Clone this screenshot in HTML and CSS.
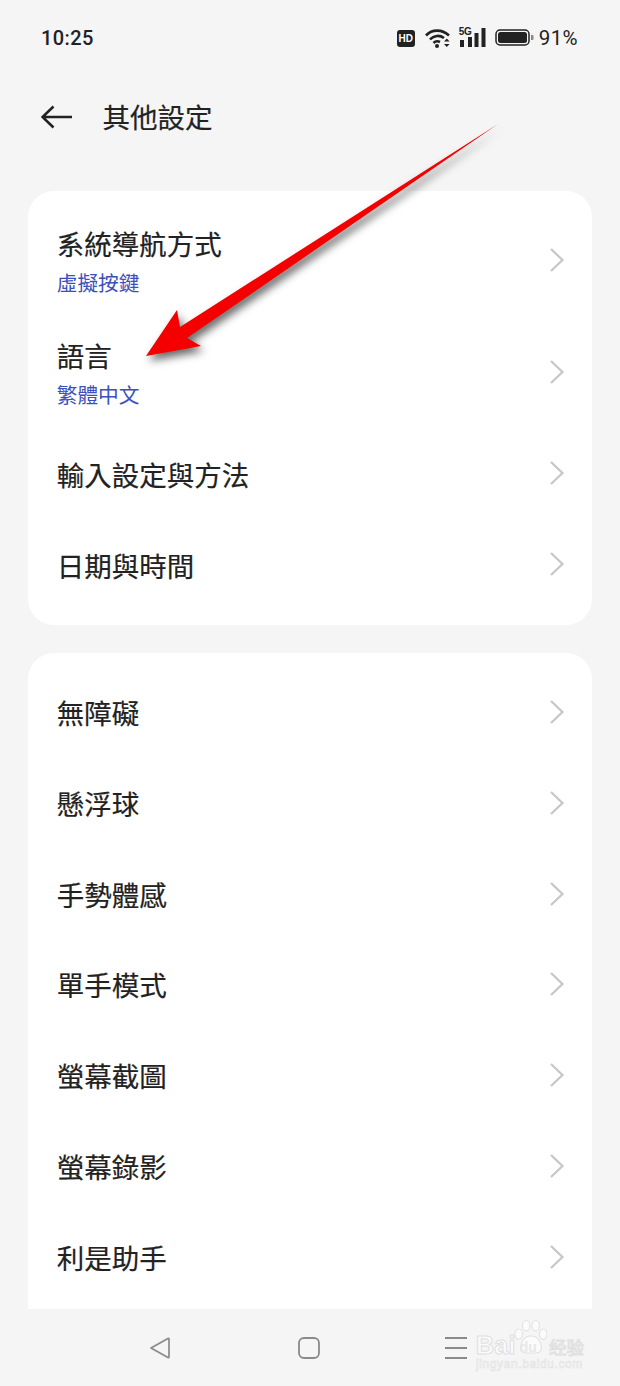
FILE: index.html
```html
<!DOCTYPE html>
<html lang="zh-Hant">
<head>
<meta charset="utf-8">
<title>其他設定</title>
<link rel="stylesheet" href="styles.css">
</head>
<body>
<div class="screen">
  <div class="status">
    <span class="time">10:25</span>
    <div class="status-right">
      <svg class="i-hd" viewBox="0 0 18 17"><rect width="18" height="17" rx="3" fill="#222"/></svg>
      <span class="hd-label">HD</span>
      <svg class="i-wifi" viewBox="0 0 26 20"><g fill="none" stroke="#222" stroke-width="2.6"><path d="M1 7.5C7 1 17 1 24 7.5"/><path d="M5 11.5C9 7 15 7 19 10"/><path d="M8.5 15C10.5 13 13 13 15 14"/></g><circle cx="12" cy="18" r="2" fill="#222"/><path d="M19 13.5l2.8-3 2.800 3zM19 16l2.800 3 2.800-3z" fill="#222"/></svg>
      <div class="signal">
        <span class="fiveg">5G</span>
        <svg class="i-bars" viewBox="0 0 28 19"><g fill="#222"><rect x="1" y="12" width="4" height="7"/><rect x="9" y="9" width="4" height="10"/><rect x="15.500" y="5" width="4" height="14"/><rect x="22.500" y="0" width="4" height="19"/></g></svg>
      </div>
      <svg class="i-batt" viewBox="0 0 39 17"><rect x="1" y="1" width="33" height="15" rx="4" fill="none" stroke="#222" stroke-width="1.500"/><rect x="3" y="3" width="29" height="11" rx="2.500" fill="#222"/><path d="M36 6h1.500a1 1 0 0 1 1 1v3a1 1 0 0 1-1 1H36z" fill="#888"/></svg>
      <span class="pct">91%</span>
    </div>
  </div>

  <header class="head">
    <svg class="i-back" viewBox="0 0 32 24"><path d="M31 12H2M12.500 1.500L1.500 12l11 10.500" fill="none" stroke="#222" stroke-width="2.600"/></svg>
    <h1 class="title">其他設定</h1>
  </header>

  <main class="list">
    <section class="card">
      <div class="row row-tall"><div class="copy"><div class="label">系統導航方式</div><div class="sub">虛擬按鍵</div></div><svg class="chev" viewBox="0 0 16 26"><path d="M2 2l11.500 11L2 24"/></svg></div>
      <div class="row row-tall"><div class="copy"><div class="label">語言</div><div class="sub">繁體中文</div></div><svg class="chev" viewBox="0 0 16 26"><path d="M2 2l11.500 11L2 24"/></svg></div>
      <div class="row"><div class="label label-low">輸入設定與方法</div><svg class="chev" viewBox="0 0 16 26"><path d="M2 2l11.500 11L2 24"/></svg></div>
      <div class="row"><div class="label label-low">日期與時間</div><svg class="chev" viewBox="0 0 16 26"><path d="M2 2l11.500 11L2 24"/></svg></div>
    </section>
    <section class="card card-open">
      <div class="row"><div class="label">無障礙</div><svg class="chev" viewBox="0 0 16 26"><path d="M2 2l11.500 11L2 24"/></svg></div>
      <div class="row"><div class="label">懸浮球</div><svg class="chev" viewBox="0 0 16 26"><path d="M2 2l11.500 11L2 24"/></svg></div>
      <div class="row"><div class="label">手勢體感</div><svg class="chev" viewBox="0 0 16 26"><path d="M2 2l11.500 11L2 24"/></svg></div>
      <div class="row"><div class="label">單手模式</div><svg class="chev" viewBox="0 0 16 26"><path d="M2 2l11.500 11L2 24"/></svg></div>
      <div class="row"><div class="label">螢幕截圖</div><svg class="chev" viewBox="0 0 16 26"><path d="M2 2l11.500 11L2 24"/></svg></div>
      <div class="row"><div class="label">螢幕錄影</div><svg class="chev" viewBox="0 0 16 26"><path d="M2 2l11.500 11L2 24"/></svg></div>
      <div class="row"><div class="label">利是助手</div><svg class="chev" viewBox="0 0 16 26"><path d="M2 2l11.500 11L2 24"/></svg></div>
    </section>
  </main>

  <nav class="nav">
    <svg class="nav-i" viewBox="0 0 22 22"><path d="M2 11L19 1.500q1-.4 1 .8v17.400q0 1.200-1 .8z" fill="none" stroke="#8a8a8a" stroke-width="1.700" stroke-linejoin="round"/></svg>
    <svg class="nav-i nav-home" viewBox="0 0 22 22"><rect x="1" y="1" width="20" height="20" rx="5" fill="none" stroke="#8a8a8a" stroke-width="1.800"/></svg>
    <svg class="nav-i" viewBox="0 0 22 22"><path d="M0 1h22M0 11h22M0 21h22" stroke="#8a8a8a" stroke-width="1.800"/></svg>
  </nav>

  <svg class="arrow" viewBox="0 0 620 400"><polygon points="498,124 187,338 201,346 146,356 177,310 180,327" fill="#f40000"/></svg>

  <div class="mark">
    <svg class="paw" viewBox="0 0 36 36"><g fill="#fbfbfb" stroke="#e2e2e2" stroke-width="1.200"><ellipse cx="6" cy="15" rx="4" ry="5.500"/><ellipse cx="14" cy="6" rx="4" ry="5.500"/><ellipse cx="24" cy="6" rx="4" ry="5.500"/><ellipse cx="32" cy="15" rx="4" ry="5.500"/><path d="M8 30c0-8 5-13 11-13s11 5 11 13c0 5-5 5-11 5S8 35 8 30z"/></g></svg>
    <div class="mark-main"><span class="mark-bai">Bai</span><span class="mark-du">du</span><span class="mark-cn">经验</span></div>
    <div class="mark-url">jingyan.baidu.com</div>
  </div>
</div>
</body>
</html>
```
FILE: styles.css
```css
* { box-sizing: border-box; }
html, body { margin: 0; padding: 0; }
body { background: #f5f5f5; font-family: "Noto Sans CJK TC", "Noto Sans", sans-serif; color: #222; }
.screen { position: relative; width: 620px; height: 1386px; overflow: hidden; display: flex; flex-direction: column; background: #f5f5f5; }

.status { height: 75px; flex: none; display: flex; align-items: flex-start; justify-content: space-between; padding: 25px 42px 0 41px; }
.time { font: 500 20px/26px Roboto, sans-serif; letter-spacing: .4px; }
.status-right { position: relative; display: flex; align-items: flex-start; height: 26px; padding-top: 3px; }
.i-hd { width: 18px; height: 17px; margin-top: 2px; }
.hd-label { position: absolute; left: 0; top: 5px; width: 18px; text-align: center; font: 700 10px/17px "Liberation Sans", sans-serif; color: #fff; }
.i-wifi { width: 26px; height: 20px; margin-left: 10px; }
.signal { position: relative; width: 28px; height: 20px; margin-left: 8px; }
.fiveg { position: absolute; left: 0; top: -2px; font: 700 10px/12px "Liberation Sans", sans-serif; letter-spacing: -.4px; }
.i-bars { position: absolute; left: 0; top: 0; width: 28px; height: 19px; }
.i-batt { width: 39px; height: 17px; margin: 1px 0 0 8px; }
.pct { font: 400 20.500px/20px Roboto, sans-serif; margin-left: 5px; letter-spacing: .4px; }

.head { height: 116px; flex: none; display: flex; align-items: flex-start; padding: 0 0 0 41px; }
.i-back { width: 32px; height: 24px; flex: none; margin-top: 30px; }
.title { margin: 21px 0 0 29.500px; font-size: 27.500px; line-height: 40px; font-weight: 400; -webkit-text-stroke: .2px #222; }

.list { flex: 1; min-height: 0; padding: 0 28px; display: flex; flex-direction: column; gap: 28px; overflow: hidden; }
.card { flex: none; background: #fff; border-radius: 26px; padding: 13.500px 0 15.500px; }
.card-open { flex: 1; min-height: 0; border-radius: 26px 26px 0 0; padding-bottom: 0; }
.card-open .row { height: 90.850px; }
.row { height: 91px; display: flex; align-items: center; justify-content: space-between; padding: 0 27px 0 28.700px; }
.row-tall { height: 111.500px; }
.label { font-size: 27.500px; line-height: 40px; white-space: nowrap; -webkit-text-stroke: .2px #222; }
.label-low { margin-top: 2px; }
.copy { display: flex; flex-direction: column; }
.sub { font-size: 20.700px; line-height: 30px; color: #3c50bd; margin-top: 4px; }
.chev { width: 16px; height: 26px; flex: none; fill: none; stroke: #c6c6c6; stroke-width: 2.200; }

.nav { height: 77px; flex: none; display: flex; align-items: flex-start; padding: 28px 0 0 149px; gap: 126px; }
.nav-i { width: 22px; height: 22px; flex: none; }
.nav-home { margin: 0 -1px 0 1px; }

.arrow { position: absolute; left: 0; top: 0; width: 620px; height: 400px; filter: drop-shadow(3px 5px 4px rgba(0,0,0,.6)); }

.mark { position: absolute; left: 476px; top: 1319px; width: 110px; height: 54px; color: #fbfbfb; }
.paw { position: absolute; left: 37px; top: 0; width: 34px; height: 36px; }
.mark-main { position: absolute; left: 0; top: 12px; white-space: nowrap; font: 700 25px/28px "Liberation Sans", sans-serif; -webkit-text-stroke: 1px #e0e0e0; }
.mark-bai { letter-spacing: .3px; }
.mark-du { position: relative; top: -2px; margin-left: 4px; font-size: 14px; color: #e8e8e8; -webkit-text-stroke: 0; }
.mark-cn { font: 400 17.500px/28px "Noto Sans CJK SC", sans-serif; margin-left: 12px; }
.mark-url { position: absolute; left: 0; top: 38px; white-space: nowrap; font: 400 12px/14px "Liberation Sans", sans-serif; -webkit-text-stroke: .6px #e2e2e2; letter-spacing: .6px; }
```
